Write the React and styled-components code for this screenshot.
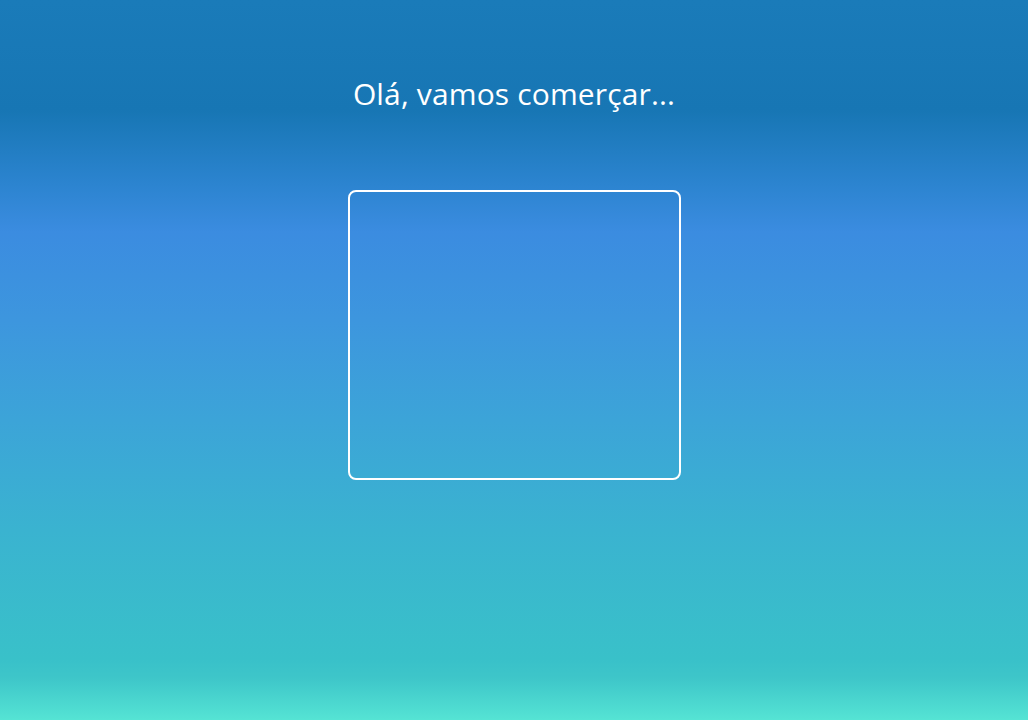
import React from "react";
import styled, { createGlobalStyle } from "styled-components";

const Global = createGlobalStyle`
  html, body { margin: 0; padding: 0; }
  body { font-family: "Open Sans", "Noto Sans", sans-serif; }
`;

const Screen = styled.div`
  width: 1028px;
  height: 720px;
  overflow: hidden;
  display: flex;
  flex-direction: column;
  align-items: center;
  background: linear-gradient(
    to bottom,
    #1a7bb9 0px,
    #1776b4 110px,
    #2c84d0 185px,
    #3b8ce0 232px,
    #3d96de 320px,
    #3ca4d8 420px,
    #3ab3d0 530px,
    #39c1c9 660px,
    #3ec6c9 678px,
    #55e4d4 720px
  );
`;

const Title = styled.h1`
  margin: 74px 0 0;
  font-family: "Open Sans", "Noto Sans", sans-serif;
  font-weight: 400;
  font-size: 30px;
  line-height: 40px;
  color: #ffffff;
  letter-spacing: 0.15px;
`;

const Frame = styled.div`
  margin-top: 76px;
  width: 333px;
  height: 290px;
  box-sizing: border-box;
  border: 2px solid #ffffff;
  border-radius: 8px;
`;

export default function App() {
  return (
    <>
      <Global />
      <Screen>
        <Title>Olá, vamos comerçar...</Title>
        <Frame />
      </Screen>
    </>
  );
}
